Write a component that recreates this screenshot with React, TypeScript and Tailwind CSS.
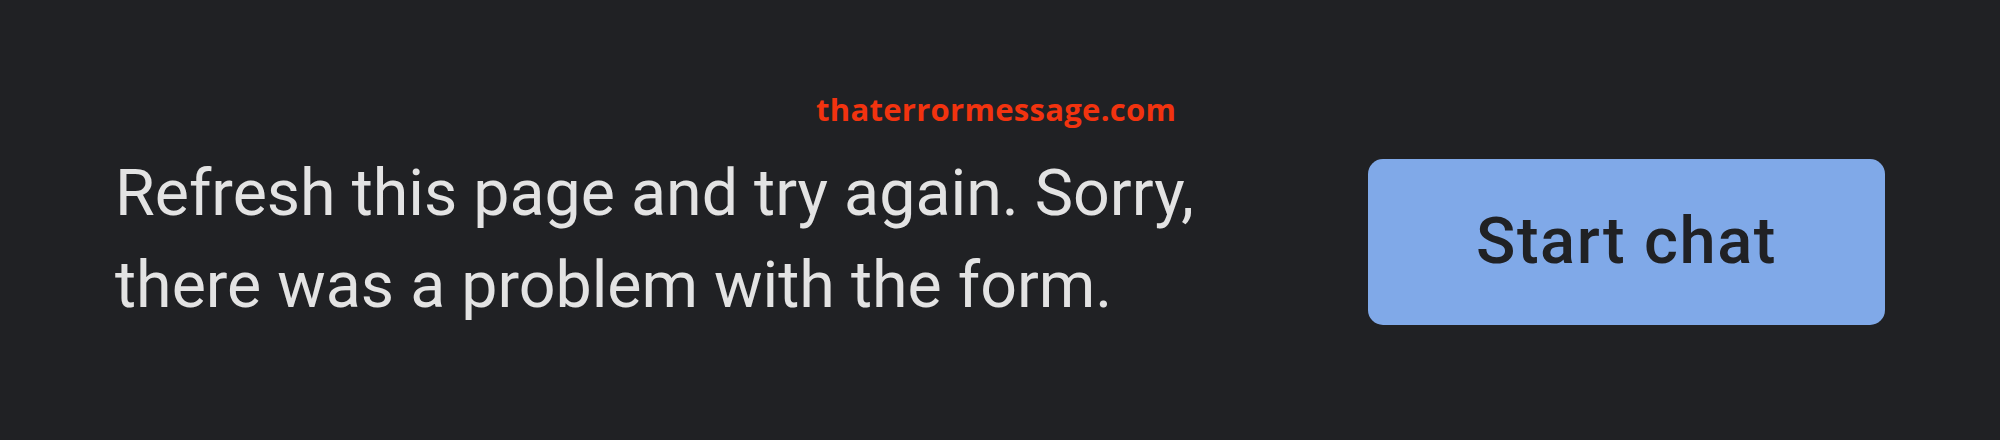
import React from 'react'

// ── ERROR BANNER ────────────────────────────────────────────────
const App: React.FC = () => {
  return (
    <div className="relative w-[2000px] h-[440px] bg-[#202124] overflow-hidden">
      {/* watermark over the banner */}
      <div className="absolute left-[816px] top-[94px] font-['Open_Sans',sans-serif] text-[31px] font-bold leading-none tracking-[0.3px] text-[#f2330f]">
        thaterrormessage.com
      </div>

      <div className="flex items-center h-full pl-[115px] pr-[115px] pt-[43px]">
        <p className="flex-1 mb-[5px] font-['Roboto',sans-serif] text-[64.5px] leading-[92px] text-[#e3e3e3]">
          Refresh this page and try again. Sorry,
          <br />
          there was a problem with the form.
        </p>
        <button className="w-[517px] h-[166px] rounded-[15px] bg-[#80a9e8] font-['Roboto',sans-serif] text-[65px] font-medium tracking-[1.6px] text-[#202124] flex items-center justify-center">
          Start chat
        </button>
      </div>
    </div>
  )
}

export default App
